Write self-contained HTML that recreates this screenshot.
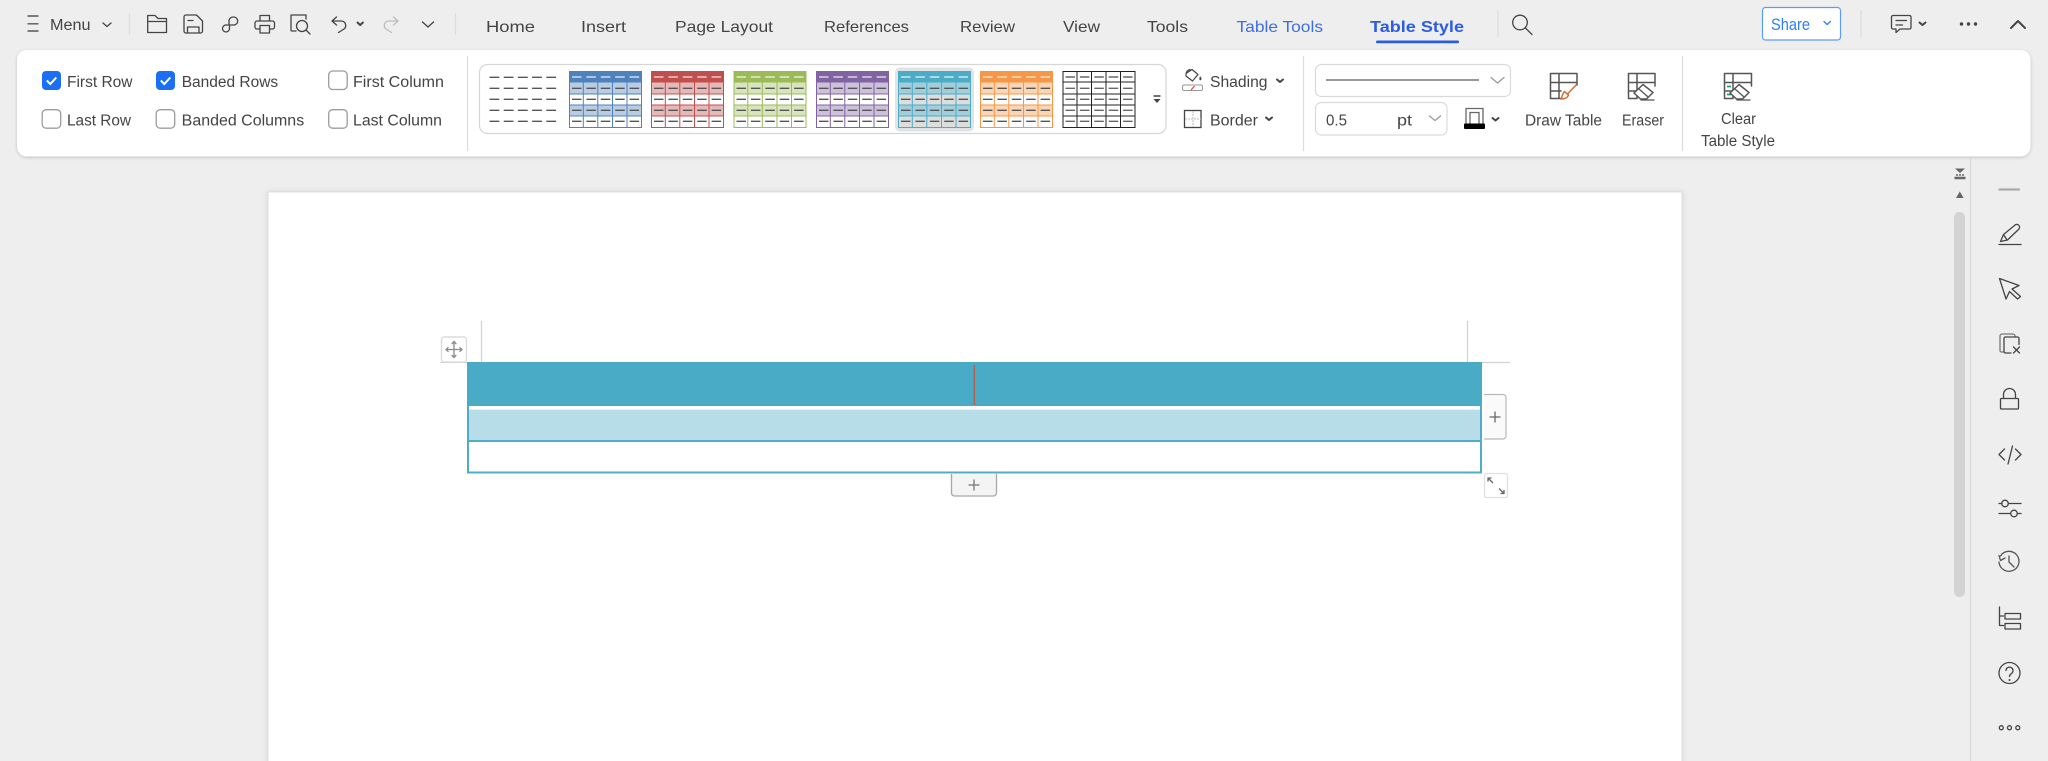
<!DOCTYPE html>
<html><head><meta charset="utf-8"><title>Table Style</title>
<style>
html,body{margin:0;padding:0;background:#eee;width:2048px;height:761px;overflow:hidden}
svg{display:block}
text{font-family:"Liberation Sans",Arial,sans-serif;font-size:15.5px;fill:#444}
.tab{font-size:16px;fill:#444}
.i{fill:none;stroke:#444;stroke-width:1.3;stroke-linecap:round;stroke-linejoin:round}
.c{fill:none;stroke:#444;stroke-width:2;stroke-linecap:round;stroke-linejoin:round}
.s{stroke:#dcdcdc;stroke-width:1.2;fill:none}
</style></head><body>
<svg width="2048" height="761" viewBox="0 0 2048 761" xmlns="http://www.w3.org/2000/svg">
<defs>
<filter id="sh" x="-2%" y="-10%" width="104%" height="125%"><feDropShadow dx="0" dy="1" stdDeviation="1.6" flood-color="#000" flood-opacity=".2"/></filter>
<filter id="ps" x="-2%" y="-2%" width="104%" height="104%"><feDropShadow dx="0" dy="0" stdDeviation="3" flood-color="#000" flood-opacity=".1"/></filter>
<symbol id="th" viewBox="0 0 73 57" width="73" height="57" overflow="visible">
<rect x=".5" y=".5" width="72" height="56" style="fill:var(--w)"/>
<rect x="0" y="0" width="73" height="11" style="fill:var(--f)"/>
<rect x="0" y="11" width="73" height="12" style="fill:var(--b)"/>
<rect x="0" y="34" width="73" height="11" style="fill:var(--b)"/>
<path d="M.5 .5H72.500V56.500H.5ZM14.300 11V57M28.800 11V57M43.500 11V57M58 11V57M0 11H73M0 23H73M0 34H73M0 45H73" fill="none" stroke-width="1" style="stroke:var(--h)"/>
<path d="M3 6H72" fill="none" stroke-width="1.300" stroke-dasharray="9.500 4.900" style="stroke:var(--d)"/>
<path d="M3 17.300H72M3 28.300H72M3 39.300H72M3 50.300H72" fill="none" stroke="#555" stroke-width="1.400" stroke-dasharray="9.500 4.900"/>
</symbol>
<symbol id="blk" viewBox="0 0 73 57" width="73" height="57" overflow="visible">
<rect x=".5" y=".5" width="72" height="56" fill="#fff"/>
<path d="M.5 .5H72.500V56.500H.5ZM14.500 0V57M29 0V57M43.500 0V57M58 0V57M0 11H73M0 23H73M0 34H73M0 45H73" fill="none" stroke="#222" stroke-width="1"/>
<path d="M3 6H72M3 17.300H72M3 28.300H72M3 39.300H72M3 50.300H72" fill="none" stroke="#666" stroke-width="1.400" stroke-dasharray="9.500 4.900"/>
</symbol>
</defs>

<rect width="2048" height="761" fill="#eee"/>

<!-- document page -->
<rect x="268" y="192" width="1414" height="600" fill="#fff" stroke="#dcdcdc" filter="url(#ps)"/>

<!-- ribbon panel -->
<rect x="17" y="50" width="2013.500" height="106.500" rx="10" fill="#fff" filter="url(#sh)"/>

<!-- top bar left -->
<path d="M27.500 16H38.500M27.500 23.800H38.500M27.500 31H38.500" fill="none" stroke="#555" stroke-width="1.400"/>
<text x="50" y="30" textLength="40.500" lengthAdjust="spacingAndGlyphs">Menu</text>
<path d="M103 23l4 3.500 4-3.500" class="i"/>
<path d="M129.500 13V35M455.500 13V35M1498 10V37M1861 10V37" class="s"/>
<path d="M147.700 32.500V15.500h7.300l3 3h8.500v14zM148 21.500H166" class="i"/>
<path d="M184 31V17a2 2 0 0 1 2-2h10.500l6 6v10a2 2 0 0 1-2 2H186a2 2 0 0 1-2-2zM188 20.500h5M187.500 33v-6h11.500v6" class="i"/>
<path d="M229 24v-3a4 4 0 0 1 4-4h.7a4 4 0 0 1 0 8H226a3.500 3.500 0 0 0 0 7 3.500 3.500 0 0 0 3.500-3.500V25" class="i"/>
<path d="M260 21v-5.500h9.500V21M260 29h-3a2 2 0 0 1-2-2v-4a2 2 0 0 1 2-2h15.500a2 2 0 0 1 2 2v4a2 2 0 0 1-2 2h-3M260 25.500h9.500V33H260z" class="i"/>
<path d="M296 31h-4a1 1 0 0 1-1-1V15h15v4" class="i"/><circle cx="302" cy="26" r="5.500" class="i"/><path d="M306 30l4 4" class="i"/>
<path d="M336.500 17l-4.500 4 4.500 4M332.500 21H341a4.500 4.500 0 0 1 3 8l-5.500 3.500" class="i"/>
<path d="M357.500 22.500l2.700 2.500 2.700-2.500" class="c"/>
<path d="M393.500 17l4.500 4-4.500 4M397.500 21H389a4.500 4.500 0 0 0-3 8l5.500 3.500" class="i" style="stroke:#bdbdbd"/>
<path d="M422.500 22l5.500 5 5.500-5" class="i"/>

<!-- tabs -->
<text class="tab" x="486" y="32" textLength="49" lengthAdjust="spacingAndGlyphs">Home</text>
<text class="tab" x="581" y="32" textLength="45" lengthAdjust="spacingAndGlyphs">Insert</text>
<text class="tab" x="675" y="32" textLength="98" lengthAdjust="spacingAndGlyphs">Page Layout</text>
<text class="tab" x="824" y="32" textLength="85" lengthAdjust="spacingAndGlyphs">References</text>
<text class="tab" x="960" y="32" textLength="55" lengthAdjust="spacingAndGlyphs">Review</text>
<text class="tab" x="1063" y="32" textLength="37" lengthAdjust="spacingAndGlyphs">View</text>
<text class="tab" x="1147" y="32" textLength="41" lengthAdjust="spacingAndGlyphs">Tools</text>
<text class="tab" x="1236.500" y="32" textLength="86.500" lengthAdjust="spacingAndGlyphs" style="fill:#3f6ee0">Table Tools</text>
<text class="tab" x="1370" y="32" textLength="94" lengthAdjust="spacingAndGlyphs" style="fill:#2b5de0;font-weight:700">Table Style</text>
<rect x="1376" y="40.500" width="83" height="2.800" rx="1.400" fill="#2b5de0"/>

<!-- top bar right -->
<circle cx="1520" cy="22.500" r="7.300" class="i"/><path d="M1525.500 28l6.500 6.500" class="i"/>
<rect x="1762.500" y="7.500" width="78" height="32.500" rx="3" fill="#fff" stroke="#5b9cf6" stroke-width="1.200"/>
<text x="1771" y="30" textLength="39" lengthAdjust="spacingAndGlyphs" style="fill:#2b7fff;font-size:16.500px">Share</text>
<path d="M1824 21.500l3.200 3 3.200-3" class="i" style="stroke:#2b7fff"/>
<path d="M1893 15.500h16.500a1.500 1.500 0 0 1 1.500 1.500v10.500a1.500 1.500 0 0 1-1.500 1.500h-9.500l-4 3.500v-3.500h-3a1.500 1.500 0 0 1-1.500-1.500V17a1.500 1.500 0 0 1 1.500-1.500zM1896 20.500h10.500M1896 25h6.500" class="i"/>
<path d="M1919.500 22.500l3 2.500 3-2.500" class="c"/>
<circle cx="1961.500" cy="24" r="1.700" fill="#444"/><circle cx="1968.500" cy="24" r="1.700" fill="#444"/><circle cx="1975.500" cy="24" r="1.700" fill="#444"/>
<path d="M2011 28l7-7 7 7" class="c"/>

<!-- checkboxes -->
<rect x="42" y="71" width="19" height="19" rx="4" fill="#1a6ff5"/><path d="M46.800 80.500l3.500 3.500 6-6.500" fill="none" stroke="#fff" stroke-width="2"/>
<rect x="156" y="71" width="19" height="19" rx="4" fill="#1a6ff5"/><path d="M160.800 80.500l3.500 3.500 6-6.500" fill="none" stroke="#fff" stroke-width="2"/>
<rect x="328.700" y="71" width="18.500" height="18.500" rx="4" fill="#fff" stroke="#9c9c9c" stroke-width="1.300"/>
<rect x="42.200" y="109.700" width="18.500" height="18.500" rx="4" fill="#fff" stroke="#9c9c9c" stroke-width="1.300"/>
<rect x="156.200" y="109.700" width="18.500" height="18.500" rx="4" fill="#fff" stroke="#9c9c9c" stroke-width="1.300"/>
<rect x="328.700" y="109.700" width="18.500" height="18.500" rx="4" fill="#fff" stroke="#9c9c9c" stroke-width="1.300"/>
<text x="67" y="87" textLength="65.500" lengthAdjust="spacingAndGlyphs">First Row</text>
<text x="67" y="125.500" textLength="64" lengthAdjust="spacingAndGlyphs">Last Row</text>
<text x="181.700" y="87" textLength="96.500" lengthAdjust="spacingAndGlyphs">Banded Rows</text>
<text x="181.700" y="125.500" textLength="122.500" lengthAdjust="spacingAndGlyphs">Banded Columns</text>
<text x="353" y="87" textLength="91" lengthAdjust="spacingAndGlyphs">First Column</text>
<text x="353" y="125.500" textLength="89" lengthAdjust="spacingAndGlyphs">Last Column</text>
<path d="M467.500 56V151M1303.500 56V151M1682.500 56V151" class="s"/>

<!-- gallery -->
<rect x="479.500" y="64.500" width="686.500" height="69" rx="8" fill="#fff" stroke="#d6d6d6" stroke-width="1.200"/>
<path d="M489.500 77.300H557M489.500 88.300H557M489.500 99.300H557M489.500 110.300H557M489.500 121.300H557" fill="none" stroke="#555" stroke-width="1.400" stroke-dasharray="9.800 4.400"/>
<use href="#th" x="569" y="71" style="--h:#4f81bd;--f:#4f81bd;--b:#b8cce4;--w:#fff;--d:#e6eef8"/>
<use href="#th" x="651" y="71" style="--h:#c0504d;--f:#c0504d;--b:#e6b8b7;--w:#fff;--d:#f6e4e3"/>
<use href="#th" x="733.500" y="71" style="--h:#9bbb59;--f:#9bbb59;--b:#d8e4bc;--w:#fff;--d:#f1f6e5"/>
<use href="#th" x="816" y="71" style="--h:#8064a2;--f:#8064a2;--b:#ccc0da;--w:#fff;--d:#ece6f3"/>
<rect x="895" y="67.500" width="79" height="64" rx="5" fill="#e1e4e6"/>
<use href="#th" x="898" y="71" style="--h:#4bacc6;--f:#4bacc6;--b:#a0cedb;--w:#dcdddd;--d:#e6f4f8"/>
<use href="#th" x="980" y="71" style="--h:#f79646;--f:#f79646;--b:#fcd5b4;--w:#fff;--d:#fdeedd"/>
<use href="#blk" x="1062.500" y="71"/>
<path d="M1153.500 96h7" stroke="#444" stroke-width="1.500"/><path d="M1153.500 99h7l-3.500 4z" fill="#444"/>

<!-- shading / border -->
<path d="M1186 73.500l6-4 6 5-5.500 6.500-6.500-5zM1186 73.500c.5-2 2-3.500 4-4" class="i" style="stroke-width:1.200"/>
<path d="M1200 76c1.500 2 2 3 1 4s-2.500 0-1-4z" fill="#444"/>
<rect x="1182.500" y="85" width="20" height="5.500" rx="1.500" fill="#fff" stroke="#999"/><path d="M1191 90l3.500-4" stroke="#e2453c" stroke-width="1.200"/>
<text x="1210" y="87" textLength="57.500" lengthAdjust="spacingAndGlyphs">Shading</text>
<path d="M1277 79.500l3 2.500 3-2.500" class="c"/>
<rect x="1184.500" y="110.500" width="16.500" height="17" fill="none" stroke="#444" stroke-width="1.300"/>
<path d="M1193 111V127M1185 119H1201" stroke="#bbb" stroke-width="1" stroke-dasharray="2 1"/>
<text x="1210" y="125.500" textLength="48" lengthAdjust="spacingAndGlyphs">Border</text>
<path d="M1266 117.500l3 2.500 3-2.500" class="c"/>

<!-- line style -->
<rect x="1315.500" y="64.500" width="195" height="32" rx="6" fill="#fff" stroke="#dadada" stroke-width="1.200"/>
<path d="M1326 80H1479" stroke="#777" stroke-width="1.500"/>
<path d="M1491 77.500l6.500 5.500 6.500-5.500" class="i" style="stroke:#999"/>
<rect x="1315.500" y="102.500" width="131.500" height="32.500" rx="6" fill="#fff" stroke="#dadada" stroke-width="1.200"/>
<text x="1326" y="125.500" textLength="21" lengthAdjust="spacingAndGlyphs">0.5</text>
<text x="1397" y="125.500" textLength="15" lengthAdjust="spacingAndGlyphs">pt</text>
<path d="M1429.500 116l5.500 4.500 5.500-4.500" class="i" style="stroke:#999"/>
<path d="M1466 124V108.500h17V124M1470 124V112.500h9V124" fill="none" stroke="#666" stroke-width="1.300"/>
<rect x="1464" y="123.500" width="21" height="5.500" rx="1" fill="#000"/>
<path d="M1492.500 118l3 2.500 3-2.500" class="c"/>

<!-- draw table -->
<path d="M1550.500 73.500H1577V85M1561 98.500H1550.500V73.500M1550.500 82.500H1577M1550.500 91H1561M1559 73.500V98.500" class="i" style="stroke:#555;stroke-width:1.500"/>
<path d="M1576 85l-8.500 9M1564.500 91.500c-2 1.500-2 5-3.500 7.500 3.500 0 6.500-1 7.500-4z" class="i" style="stroke:#d2703c;stroke-width:1.500"/>
<text x="1525" y="125.500" textLength="77" lengthAdjust="spacingAndGlyphs">Draw Table</text>
<path d="M1637 98.500h-8.500V73.500H1655V86M1628.500 82.500H1655M1628.500 91H1637M1637 73.500V98.500" class="i" style="stroke:#555;stroke-width:1.500"/>
<path d="M1634 93l9-8.500 10 8-6.500 6.500h-6z" fill="#fff" stroke="#555" stroke-width="1.500" stroke-linejoin="round"/><path d="M1639 89l8.500 7.500M1641 100h13" class="i" style="stroke:#555"/>
<text x="1622" y="125.500" textLength="42" lengthAdjust="spacingAndGlyphs">Eraser</text>

<!-- clear style -->
<path d="M1733 98.500h-8.500V73.500H1751.500V86M1724.500 82.500H1751.500M1724.500 91H1733M1733 73.500V98.500" class="i" style="stroke:#555;stroke-width:1.500"/>
<path d="M1727 86.500h4M1727 94.500h4" stroke="#1aa36b" stroke-width="1.800"/>
<path d="M1730 93l9-8.500 10 8-6.500 6.500h-6z" fill="#fff" stroke="#555" stroke-width="1.500" stroke-linejoin="round"/><path d="M1735 89l8.500 7.500M1737 100h13" class="i" style="stroke:#555"/>
<text x="1721" y="124" textLength="35" lengthAdjust="spacingAndGlyphs">Clear</text>
<text x="1701" y="146" textLength="74" lengthAdjust="spacingAndGlyphs">Table Style</text>

<!-- table on page -->
<path d="M481.500 321V362M1467.500 321V362M440 362.500H467M1482 362.500H1510" stroke="#d2d2d2" stroke-width="1.200" fill="none"/>
<rect x="441.500" y="337" width="25" height="25" rx="2.500" fill="#fff" stroke="#dcdcdc" stroke-width="1.400"/>
<path d="M454 342V357M446.500 349.500H461.500M451.700 344l2.300-2.500 2.300 2.500M451.700 355l2.300 2.500 2.300-2.500M448.500 347.200L446 349.500l2.500 2.300M459.500 347.200l2.500 2.300-2.500 2.300" fill="none" stroke="#8a8a8a" stroke-width="1.300"/>
<rect x="467" y="362" width="1015" height="44" fill="#4aabc6"/>
<rect x="467" y="406" width="1015" height="67" fill="#fff"/>
<rect x="469" y="410" width="1011" height="30" fill="#b7dde8"/>
<rect x="469" y="409" width="1011" height="1" fill="#e4f1f5"/>
<path d="M468 406V472.500H1481V406M468 441H1481" fill="none" stroke="#4fadc7" stroke-width="2"/>
<rect x="973.500" y="365" width="1.500" height="40" fill="#b5604f"/>
<!-- add column -->
<path d="M1484 394.500h19a3 3 0 0 1 3 3V436a3 3 0 0 1-3 3h-19" fill="#fafafa" stroke="#b8b8b8" stroke-width="1.200"/>
<path d="M1489.500 417H1500.500M1495 411.500V422.500" stroke="#666" stroke-width="1.300"/>
<!-- add row -->
<path d="M951.500 474v19a3 3 0 0 0 3 3h39a3 3 0 0 0 3-3v-19" fill="#f4f4f4" stroke="#a8a8a8" stroke-width="1.300"/>
<path d="M968.500 485H979.500M974 479.500V490.500" stroke="#777" stroke-width="1.300"/>
<!-- resize -->
<rect x="1484.500" y="473.500" width="23" height="24" rx="2" fill="#fff" stroke="#e0e0e0" stroke-width="1.300"/>
<path d="M1488 478l5 5M1488 481.500V478h3.500M1504 493.500l-5-5M1504 490v3.500h-3.500" fill="none" stroke="#666" stroke-width="1.300"/>

<!-- scrollbar -->
<path d="M1970.500 157V761" stroke="#d8d8d8" stroke-width="1.200"/>
<path d="M1955 168.500h10l-5 4.500z" fill="#666"/><path d="M1954.500 178h11" stroke="#666" stroke-width="2.500"/><path d="M1956 175h2M1959 175h2M1962 175h2" stroke="#666" stroke-width="1.500"/>
<path d="M1956 198l3.800-6.500 3.800 6.500z" fill="#666"/>
<rect x="1954" y="212" width="11" height="385" rx="5.500" fill="#d3d3d3"/>

<!-- side icons -->
<path d="M1999.500 189.500H2019" stroke="#aaa" stroke-width="2.200" stroke-linecap="round"/>
<path d="M2000.500 241.500l3-7 11-9a2.500 2.500 0 0 1 4.500 3.500l-11.500 11zM2003.500 234.500l3.500 5.500M1999 244.500H2021" class="i"/>
<path d="M1999.500 278.500l19.500 7-7 3.500 8.500 7.500-3 2.500-8-7.500-3.500 7.500z" class="i"/>
<path d="M2003.500 352h-2a1.500 1.500 0 0 1-1.500-1.500V336a2 2 0 0 1 2-2h11a2 2 0 0 1 2 2v.500" class="i" style="stroke:#777"/>
<path d="M2011 353h-5.500a1.500 1.500 0 0 1-1.500-1.500V338.500a1.500 1.500 0 0 1 1.500-1.500h12a1.500 1.500 0 0 1 1.500 1.500v6" class="i"/>
<path d="M2013.500 347l6 6M2019.500 347l-6 6" class="i"/>
<rect x="2000.500" y="398.500" width="18" height="10.500" rx="1" class="i"/><path d="M2003.500 398v-3.500a6 6 0 0 1 12 0V398" class="i"/>
<path d="M2004.500 449l-5.500 5.500 5.500 5.500M2015.500 449l5.500 5.500-5.500 5.500M2012.500 446l-4.500 18" class="i"/>
<path d="M1999 503.500h3M2008.500 503.500h12.500M1999 513.500h11.500M2017.500 513.500h3.500" class="i"/><circle cx="2005" cy="503.500" r="3.300" class="i"/><circle cx="2014" cy="513.500" r="3.300" class="i"/>
<path d="M2000.500 556a10 10 0 1 1-1.500 6" class="i" style="stroke:#555"/><path d="M1999 555.500l1.500 5 4.500-2.500M2009 556v6l5 5" class="i" style="stroke:#555"/>
<path d="M1999.500 607V625.500h4M1999.500 616h4" class="i"/><rect x="2005" y="613.500" width="15.500" height="5.500" class="i"/><rect x="2005" y="623.500" width="15.500" height="5.500" class="i"/>
<circle cx="2009.500" cy="673" r="10.500" class="i"/><path d="M2006 670.500a3.500 3.500 0 1 1 5.500 3c-1.500 1-2 1.700-2 3" class="i"/><circle cx="2009.500" cy="680" r="1" fill="#444"/>
<circle cx="2001.300" cy="727.700" r="2" class="i"/><circle cx="2009.500" cy="727.700" r="2" class="i"/><circle cx="2017.800" cy="727.700" r="2" class="i"/>
</svg>
</body></html>
